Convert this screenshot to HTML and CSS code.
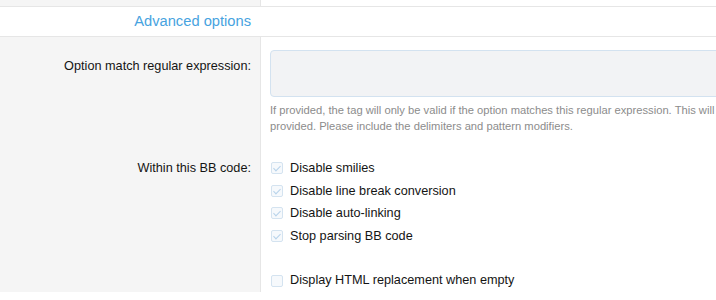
FILE: index.html
```html
<!DOCTYPE html>
<html lang="en">
<head>
<meta charset="UTF-8">
<title>BB code options</title>
<link rel="stylesheet" href="styles.css">
</head>
<body>

<!-- ===== end of previous row ===== -->
<div class="row top-strip">
  <div class="label-cell"></div>
  <div class="value-cell"></div>
</div>

<!-- ===== Advanced header ===== -->
<div class="section-header">
  <h3>Advanced options</h3>
</div>

<!-- ===== Regex ===== -->
<div class="row">
  <div class="label-cell"><label>Option match regular expression:</label></div>
  <div class="value-cell regex-cell">
    <input type="text" class="text-input">
    <p class="hint">If provided, the tag will only be valid if the option matches this regular expression. This will be ignored if no option is<br>provided. Please include the delimiters and pattern modifiers.</p>
  </div>
</div>

<!-- ===== Checkboxes ===== -->
<div class="row">
  <div class="label-cell"><label class="pad-list">Within this BB code:</label></div>
  <div class="value-cell">
    <ul class="check-list">
      <li><span class="box checked"></span>Disable smilies</li>
      <li><span class="box checked"></span>Disable line break conversion</li>
      <li><span class="box checked"></span>Disable auto-linking</li>
      <li><span class="box checked"></span>Stop parsing BB code</li>
      <li class="spaced"><span class="box"></span>Display HTML replacement when empty</li>
    </ul>
  </div>
</div>

</body>
</html>
```
FILE: styles.css
```css
:root{
  --labelBg:#f5f5f5;
  --line:#e6e6e6;
  --blue:#47a3e0;
  font-family:'Liberation Sans',Arial,sans-serif;
}
*{box-sizing:border-box}
html,body{margin:0;padding:0;height:100%;overflow:hidden}
body{background:#fff;color:#141414;font-size:12.7px}

/* ===== Rows ===== */
.row{display:grid;grid-template-columns:260px 1fr}
.label-cell{background:var(--labelBg);text-align:right;padding-right:9px}
.value-cell{border-left:1px solid var(--line);padding-left:9px;overflow:hidden;white-space:nowrap}
.top-strip{height:6px}

.section-header{
  border-top:1px solid var(--line);border-bottom:1px solid var(--line);
  height:31px;display:grid;grid-template-columns:260px 1fr
}
.section-header h3{
  margin:0;font-weight:400;font-size:14.7px;color:var(--blue);
  text-align:right;padding-right:9px;line-height:29px
}

/* ===== Regex row ===== */
.label-cell label{display:block;line-height:16px;padding-top:21px}
.regex-cell{padding-top:13px;padding-bottom:10px}
.text-input{
  display:block;width:620px;height:47px;
  background:#f2f3f5;border:1px solid #d3e2f0;border-radius:4px
}
.hint{margin:5px 0 0;font-size:11.2px;line-height:16px;color:#8c8c8c}

/* ===== Checkbox list ===== */
.label-cell label.pad-list{padding-top:13px;line-height:22.6px}
.check-list{list-style:none;margin:0;padding:13px 0 0}
.check-list li{display:flex;align-items:center;gap:7px;line-height:22.6px;padding-left:1px}
.check-list li.spaced{margin-top:22px}
.box{
  width:12px;height:12px;border:1px solid #d4e3f0;border-radius:2px;
  background:#f6f9fc;position:relative
}
.box.checked::after{
  content:"";position:absolute;left:3px;top:1px;width:3px;height:6px;
  border:solid #b6d2ea;border-width:0 1.5px 1.5px 0;transform:rotate(45deg)
}
```
